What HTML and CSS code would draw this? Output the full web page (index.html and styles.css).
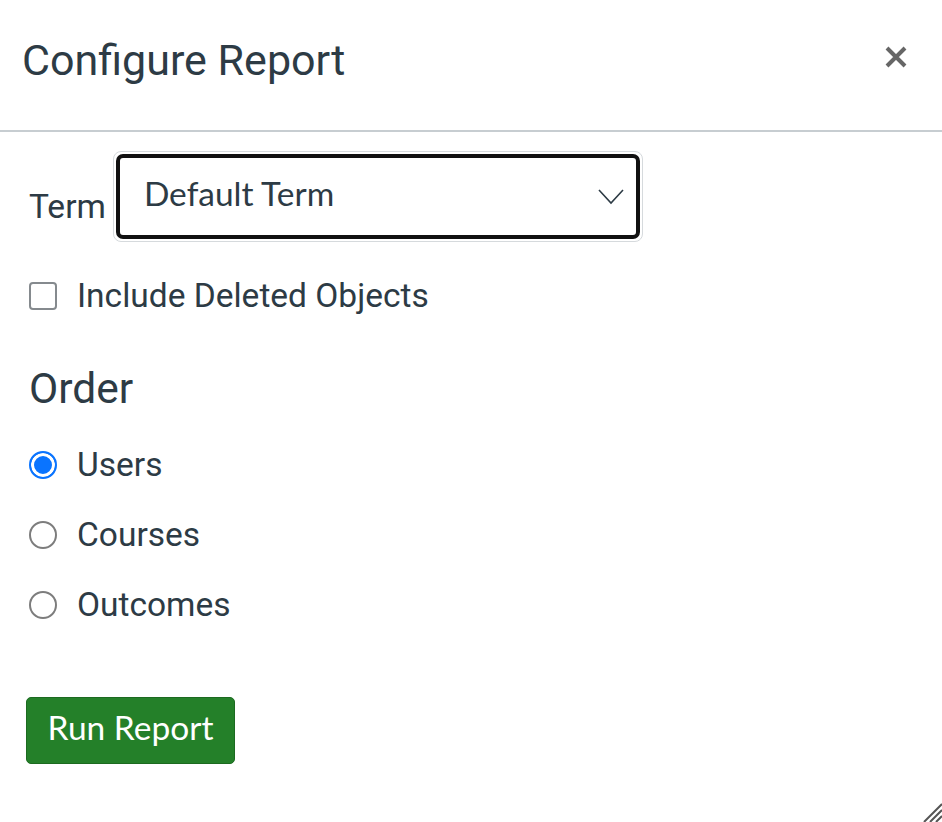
FILE: index.html
```html
<!DOCTYPE html>
<html>
<head>
<meta charset="utf-8">
<link rel="stylesheet" href="styles.css">
</head>
<body>
<div class="dialog">
  <header class="dialog-header">
    <h1 class="title">Configure Report</h1>
    <button class="close" aria-label="Close">
      <svg viewBox="0 0 24 24" width="24" height="24"><path d="M3 3 L21 21 M21 3 L3 21" stroke="#666" stroke-width="4" fill="none"/></svg>
    </button>
  </header>
  <form class="dialog-body">
    <div class="term-row">
      <label class="term-label">Term</label>
      <div class="select-wrap">
        <div class="select">
          <span class="select-value">Default Term</span>
          <svg class="chevron" viewBox="0 0 26 16" width="26" height="16"><path d="M1 1 L13 14 L25 1" stroke="#2d3b45" stroke-width="1.6" fill="none"/></svg>
        </div>
      </div>
    </div>
    <label class="check-row">
      <span class="checkbox"></span>
      <span class="opt-text">Include Deleted Objects</span>
    </label>
    <h2 class="section">Order</h2>
    <div class="radios">
      <label class="radio-row"><span class="radio checked"></span><span class="opt-text">Users</span></label>
      <label class="radio-row"><span class="radio"></span><span class="opt-text">Courses</span></label>
      <label class="radio-row"><span class="radio"></span><span class="opt-text">Outcomes</span></label>
    </div>
    <div class="actions">
      <button type="button" class="run">Run Report</button>
    </div>
  </form>
  <div class="resize">
    <svg viewBox="0 0 22 22" width="22" height="22"><path d="M22 4 L4 22 M22 10 L10 22 M22 16 L16 22" stroke="#555" stroke-width="2" fill="none"/></svg>
  </div>
</div>
</body>
</html>
```
FILE: styles.css
```css
html, body {
  margin: 0;
  padding: 0;
  background: #fff;
}
body {
  width: 942px;
  height: 822px;
  overflow: hidden;
  font-family: Roboto, "Liberation Sans", sans-serif;
  color: #2d3b45;
}
.dialog {
  position: relative;
  width: 942px;
  height: 822px;
}
.dialog-header {
  display: flex;
  align-items: center;
  justify-content: space-between;
  padding: 0 34px 0 22px;
  box-sizing: border-box;
  height: 132px;
  border-bottom: 2px solid #c7cdd1;
}
.title {
  margin: 0;
  font-weight: 400;
  font-size: 43px;
  line-height: 1;
  padding-bottom: 10px;
}
.close {
  border: 0;
  background: none;
  padding: 0;
  width: 24px;
  height: 24px;
  margin-bottom: 16px;
}
.close svg { display: block; }
.dialog-body {
  padding: 19px 0 0 29px;
}
.term-row {
  display: flex;
  align-items: flex-end;
  gap: 7px;
}
.term-label {
  font-size: 33.5px;
  line-height: 1;
  padding: 0 0 19px 0;
}
.select-wrap {
  border: 1px solid #d6dadd;
  border-radius: 8px;
  padding: 2px;
  width: 524px;
}
.select {
  border: 4px solid #111;
  border-radius: 7px;
  height: 85px;
  box-sizing: border-box;
  display: flex;
  align-items: center;
  justify-content: space-between;
  padding: 0 12px 0 24px;
}
.select-value {
  font-family: Lato, sans-serif;
  font-size: 33.5px;
  padding-bottom: 8px;
}
.chevron { display: block; }
.check-row {
  display: flex;
  align-items: center;
  gap: 20px;
  margin-top: 36px;
}
.checkbox {
  width: 24px;
  height: 24px;
  border: 2px solid #858a8e;
  border-radius: 4px;
}
.opt-text {
  font-size: 33.5px;
  line-height: 36px;
}
.section {
  margin: 54px 0 0 0;
  font-weight: 400;
  font-size: 42.5px;
  line-height: 1;
}
.radios {
  display: flex;
  flex-direction: column;
  gap: 34px;
  margin-top: 36px;
}
.radio-row {
  display: flex;
  align-items: center;
  gap: 20px;
}
.radio {
  width: 24px;
  height: 24px;
  border: 2px solid #7d7d7d;
  border-radius: 50%;
  box-sizing: content-box;
}
.radio.checked {
  border-color: #0a74ff;
  background: #0a74ff;
  box-shadow: inset 0 0 0 3px #fff;
}
.actions {
  margin-top: 74px;
}
.run {
  margin-left: -3px;
  background: #248029;
  border: 1px solid #1c6a20;
  border-radius: 5px;
  color: #fff;
  font-family: Lato, sans-serif;
  font-size: 33.5px;
  width: 209px;
  height: 67px;
  padding: 0 0 6px 0;
}
.resize {
  position: absolute;
  right: 0;
  bottom: 0;
  width: 22px;
  height: 22px;
}
.resize svg { display: block; }
```
